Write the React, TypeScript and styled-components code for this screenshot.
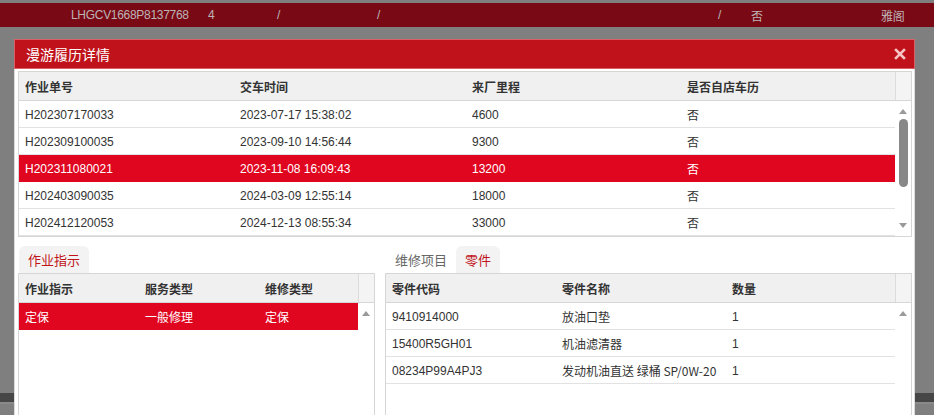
import styled, { createGlobalStyle } from "styled-components"

const GlobalStyle = createGlobalStyle`
  html, body {
    margin: 0;
    padding: 0;
    background: #7f7f7f;
    overflow: hidden;
  }
  body {
    font-family: "Liberation Sans", Arial, "Noto Sans CJK SC", sans-serif;
    font-size: 12px;
    color: #333;
  }
`

const Page = styled.div`
  position: relative;
  width: 934px;
  height: 415px;
  overflow: hidden;
  padding-top: 3px;
  box-sizing: border-box;
`

const VehicleBar = styled.div`
  height: 24px;
  background: #790a15;
  display: grid;
  grid-template-columns: 71px 137px 69px 100px 341px 33px 130px auto;
  align-items: center;
  color: #bdb3b5;
  font-size: 12px;
  letter-spacing: -0.3px;
`

const PageBody = styled.div`
  height: 366px;
`

const FooterBand = styled.div`
  height: 9px;
  background: #464646;
  border-bottom: 2px solid #8a8a8a;
`

const Dialog = styled.div`
  position: absolute;
  left: 14px;
  top: 39px;
  width: 901px;
  height: 400px;
  background: #fff;
  border: 1px solid #dcdcdc;
  box-sizing: border-box;
  display: flex;
  flex-direction: column;
`

const TitleBar = styled.div`
  height: 30px;
  margin: -1px -1px 0;
  background: #c0121a;
  border: 1px solid #d86066;
  box-sizing: border-box;
  display: flex;
  align-items: center;
  justify-content: space-between;
  padding: 0 8px 0 11px;
  color: #fff;
  font-family: "Noto Sans CJK SC", sans-serif;
  font-size: 14px;
`

const CloseButton = styled.button`
  border: 0;
  background: none;
  padding: 0;
  width: 12px;
  height: 12px;
  display: flex;
  cursor: pointer;
`

const DialogBody = styled.div`
  padding: 2px 2px 0 3px;
  display: flex;
  flex-direction: column;
`

const Table = styled.div<{ $height: number }>`
  height: ${(p) => p.$height}px;
  border: 1px solid #d6d6d6;
  display: flex;
  flex-direction: column;
  overflow: hidden;
  background: #fff;
`

const HeadRow = styled.div<{ $cols: string }>`
  display: grid;
  grid-template-columns: ${(p) => p.$cols} 16px;
  height: 28px;
  background: #f0f0f0;
  border-bottom: 1px solid #d6d6d6;
  flex-shrink: 0;
`

const HeadCell = styled.div`
  display: flex;
  align-items: center;
  padding-left: 6px;
  font-family: "Noto Sans CJK SC", sans-serif;
  font-weight: 700;
  font-size: 12px;
  color: #333;
  white-space: nowrap;
`

const HeadScrollCell = styled.div`
  border-left: 1px solid #dcdcdc;
  background: #f4f4f4;
`

const TableBody = styled.div`
  flex: 1;
  display: flex;
  min-height: 0;
`

const Rows = styled.div`
  flex: 1;
`

const Row = styled.div<{ $cols: string; $selected?: boolean }>`
  display: grid;
  grid-template-columns: ${(p) => p.$cols};
  height: 27px;
  box-sizing: border-box;
  border-bottom: 1px solid ${(p) => (p.$selected ? "#e0061f" : "#e2e2e2")};
  background: ${(p) => (p.$selected ? "#e0061f" : "#fff")};
  color: ${(p) => (p.$selected ? "#fff" : "#333")};
`

const Cell = styled.div`
  display: flex;
  align-items: center;
  padding: 1px 0 0 6px;
  white-space: nowrap;
  font-size: 12px;
`

const ScrollTrack = styled.div`
  width: 16px;
  position: relative;
  flex-shrink: 0;
`

const Arrow = styled.div<{ $down?: boolean }>`
  position: absolute;
  left: 4px;
  ${(p) => (p.$down ? "bottom: 8px;" : "top: 8px;")}
  width: 0;
  height: 0;
  border-left: 4px solid transparent;
  border-right: 4px solid transparent;
  ${(p) =>
    p.$down ? "border-top: 5px solid #9a9a9a;" : "border-bottom: 5px solid #9a9a9a;"}
`

const Thumb = styled.div`
  position: absolute;
  left: 4px;
  top: 18px;
  width: 9px;
  height: 68px;
  border-radius: 5px;
  background: #888;
`

const Lower = styled.div`
  display: flex;
  gap: 10px;
  margin-top: 9px;
`

const Panel = styled.div<{ $width?: number }>`
  ${(p) => (p.$width ? `width: ${p.$width}px;` : "flex: 1;")}
  display: flex;
  flex-direction: column;
  min-width: 0;
`

const Tabs = styled.div`
  display: flex;
  height: 27px;
  padding-left: 1px;
`

const Tab = styled.div<{ $active?: boolean }>`
  padding: 0 9px;
  line-height: 27px;
  font-family: "Noto Sans CJK SC", sans-serif;
  font-size: 13px;
  color: ${(p) => (p.$active ? "#c0141a" : "#666")};
  background: ${(p) => (p.$active ? "#f3f3f3" : "transparent")};
  border-radius: 6px 6px 0 0;
`

const Cjk = styled.span`
  font-family: "Noto Sans CJK SC", sans-serif;
`

type Grid = {
  cols: string
  head: string[]
  rows: string[][]
  selected?: number
  height: number
  thumb?: boolean
}

const DataGrid = ({ cols, head, rows, selected, height, thumb }: Grid) => (
  <Table $height={height}>
    <HeadRow $cols={cols}>
      {head.map((h) => (
        <HeadCell key={h}>{h}</HeadCell>
      ))}
      <HeadScrollCell />
    </HeadRow>
    <TableBody>
      <Rows>
        {rows.map((r, i) => (
          <Row key={i} $cols={cols} $selected={i === selected}>
            {r.map((c, j) => (
              <Cell key={j}>
                {/[\u4e00-\u9fa5]/.test(c) ? <Cjk>{c}</Cjk> : c}
              </Cell>
            ))}
          </Row>
        ))}
      </Rows>
      <ScrollTrack>
        <Arrow />
        {thumb && <Thumb />}
        {thumb && <Arrow $down />}
      </ScrollTrack>
    </TableBody>
  </Table>
)

const history = [
  ["H202307170033", "2023-07-17 15:38:02", "4600", "否"],
  ["H202309100035", "2023-09-10 14:56:44", "9300", "否"],
  ["H202311080021", "2023-11-08 16:09:43", "13200", "否"],
  ["H202403090035", "2024-03-09 12:55:14", "18000", "否"],
  ["H202412120053", "2024-12-13 08:55:34", "33000", "否"],
]

const parts = [
  ["9410914000", "放油口垫", "1"],
  ["15400R5GH01", "机油滤清器", "1"],
  ["08234P99A4PJ3", "发动机油直送 绿桶 SP/0W-20", "1"],
]

export default function App() {
  return (
    <>
      <GlobalStyle />
      <Page>
        <VehicleBar>
          <span />
          <span>LHGCV1668P8137768</span>
          <span>4</span>
          <span>/</span>
          <span>/</span>
          <span>/</span>
          <Cjk>否</Cjk>
          <Cjk>雅阁</Cjk>
        </VehicleBar>
        <PageBody />
        <FooterBand />

        <Dialog>
          <TitleBar>
            <span>漫游履历详情</span>
            <CloseButton aria-label="close">
              <svg width="12" height="12" viewBox="0 0 12 12">
                <path
                  d="M2 2 L10 10 M10 2 L2 10"
                  stroke="#f6c4c4"
                  strokeWidth="2.6"
                  strokeLinecap="square"
                />
              </svg>
            </CloseButton>
          </TitleBar>
          <DialogBody>
            <DataGrid
              cols="215px 232px 215px 1fr"
              head={["作业单号", "交车时间", "来厂里程", "是否自店车历"]}
              rows={history}
              selected={2}
              height={164}
              thumb
            />
            <Lower>
              <Panel $width={357}>
                <Tabs>
                  <Tab $active>作业指示</Tab>
                </Tabs>
                <DataGrid
                  cols="120px 120px 1fr"
                  head={["作业指示", "服务类型", "维修类型"]}
                  rows={[["定保", "一般修理", "定保"]]}
                  selected={0}
                  height={160}
                />
              </Panel>
              <Panel>
                <Tabs>
                  <Tab>维修项目</Tab>
                  <Tab $active>零件</Tab>
                </Tabs>
                <DataGrid
                  cols="170px 170px 1fr"
                  head={["零件代码", "零件名称", "数量"]}
                  rows={parts}
                  height={160}
                />
              </Panel>
            </Lower>
          </DialogBody>
        </Dialog>
      </Page>
    </>
  )
}
